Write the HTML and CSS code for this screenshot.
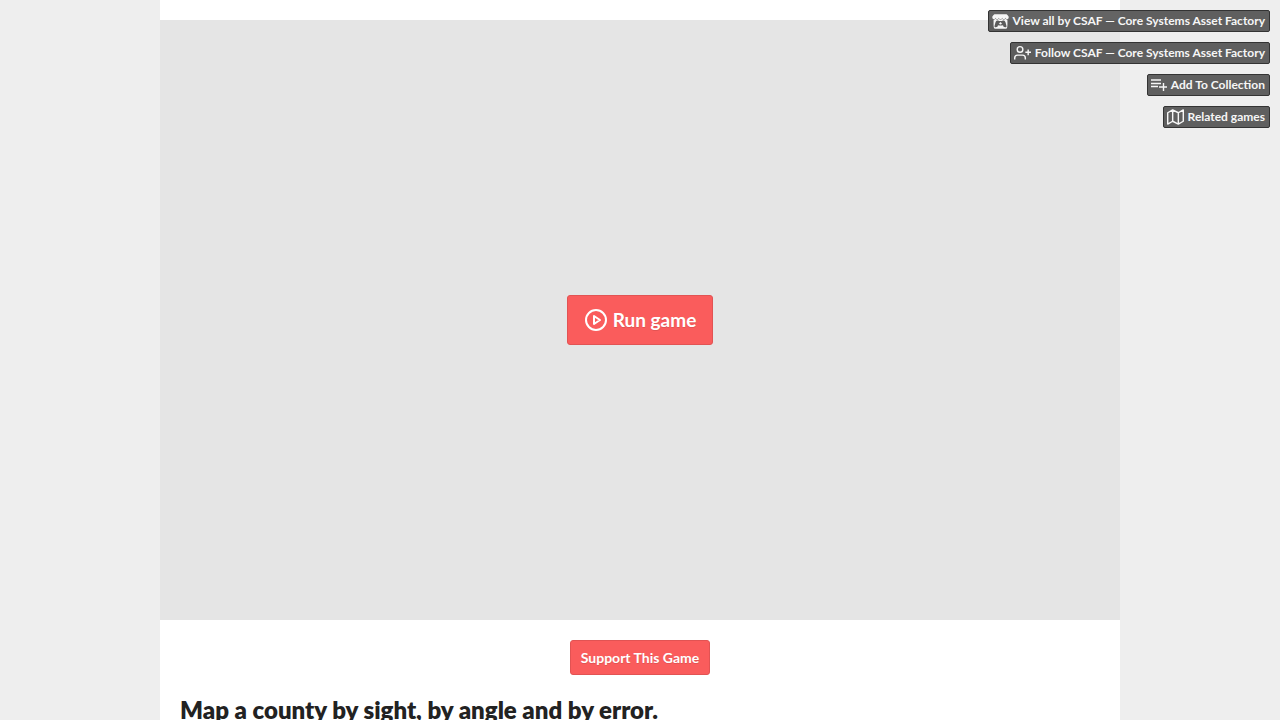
FILE: index.html
```
<!DOCTYPE html>
<html lang="en">
<head>
<meta charset="utf-8">
<title>Run game</title>
<link rel="stylesheet" href="styles.css">
</head>
<body>
<nav class="user-tools" aria-label="Page tools">
  <a class="tool" href="#all">
    <svg class="tool-icon tool-icon-solid" width="17" height="15" viewBox="0 1 24 22" aria-hidden="true"><path d="M3.13 1.338C2.08 1.96.02 4.328 0 4.95v1.03c0 1.303 1.22 2.45 2.325 2.45 1.33 0 2.436-1.102 2.436-2.41 0 1.308 1.07 2.41 2.4 2.41 1.328 0 2.362-1.102 2.362-2.41 0 1.308 1.137 2.41 2.466 2.41h.024c1.33 0 2.466-1.102 2.466-2.41 0 1.308 1.034 2.41 2.363 2.41 1.33 0 2.4-1.102 2.4-2.41 0 1.308 1.106 2.41 2.435 2.41C22.78 8.43 24 7.282 24 5.98V4.95c-.02-.62-2.082-2.99-3.13-3.612-3.253-.114-5.508-.134-8.87-.133-3.362 0-7.945.053-8.87.133zm6.376 6.477a2.74 2.74 0 0 1-.468.602c-.5.49-1.19.795-1.947.795a2.786 2.786 0 0 1-1.95-.795c-.182-.178-.32-.37-.446-.59-.127.222-.303.412-.486.59a2.788 2.788 0 0 1-1.95.795c-.092 0-.187-.025-.264-.052-.107 1.113-.152 2.176-.168 2.95v.005l-.006 1.167c.02 2.334-.23 7.564 1.03 8.85 1.952.454 5.545.662 9.15.663 3.605 0 7.198-.21 9.15-.664 1.26-1.284 1.01-6.514 1.03-8.848l-.006-1.167v-.004c-.016-.775-.06-1.838-.168-2.95-.077.026-.172.052-.263.052a2.788 2.788 0 0 1-1.95-.795c-.184-.178-.36-.368-.486-.59-.127.22-.265.412-.447.59a2.786 2.786 0 0 1-1.95.794c-.76 0-1.446-.303-1.948-.793a2.74 2.74 0 0 1-.468-.602 2.738 2.738 0 0 1-.463.602 2.787 2.787 0 0 1-1.95.794h-.16a2.787 2.787 0 0 1-1.95-.793 2.738 2.738 0 0 1-.464-.602zm-2.004 2.59v.002c.795.002 1.5 0 2.373.953.687-.072 1.406-.108 2.125-.107.72 0 1.438.035 2.125.107.873-.953 1.578-.95 2.372-.953.376 0 1.876 0 2.92 2.934l1.123 4.028c.832 2.995-.266 3.068-1.636 3.07-2.03-.075-3.156-1.55-3.156-3.025-1.124.184-2.436.276-3.748.277-1.312 0-2.624-.093-3.748-.277 0 1.475-1.125 2.95-3.156 3.026-1.37-.004-2.468-.077-1.636-3.072l1.122-4.027c1.045-2.934 2.545-2.934 2.92-2.934zM12 12.714c-.002.002-2.14 1.964-2.523 2.662l1.4-.056v1.22c0 .056.56.033 1.123.007.562.026 1.124.05 1.124-.008v-1.22l1.4.055C14.138 14.677 12 12.713 12 12.713z"/></svg>
    <span>View all by CSAF — Core Systems Asset Factory</span>
  </a>
  <a class="tool" href="#follow">
    <svg class="tool-icon" width="17" height="16" viewBox="0 1 24 22" stroke-width="2" aria-hidden="true"><path d="M16 21v-2a4 4 0 0 0-4-4H5a4 4 0 0 0-4 4v2"/><circle cx="8.5" cy="7" r="4"/><path d="M20 7v8M24 11h-8"/></svg>
    <span>Follow CSAF — Core Systems Asset Factory</span>
  </a>
  <a class="tool" href="#collection">
    <svg class="tool-icon" width="16" height="16" viewBox="0 0 16 16" stroke-width="1.4" aria-hidden="true"><path d="M0 3h10M0 6.5h10M0 9.5h7M12.5 6v8M8 10h8"/></svg>
    <span>Add To Collection</span>
  </a>
  <a class="tool" href="#related">
    <svg class="tool-icon" width="17" height="16" viewBox="0 1 24 22" stroke-width="2" stroke-linecap="round" aria-hidden="true"><path d="M1 6v16l7-4 8 4 7-4V2l-7 4-8-4zM8 2v16M16 6v16"/></svg>
    <span>Related games</span>
  </a>
</nav>
<main class="page">
  <section class="game-frame">
    <button class="button run-button" type="button">
      <svg class="play-icon" width="24" height="24" viewBox="0 0 24 24" aria-hidden="true"><circle cx="12" cy="12" r="10"/><path d="M10 8l6 4-6 4z"/></svg>
      <span>Run game</span>
    </button>
  </section>
  <div class="support-row">
    <a class="button support-button" href="#support">Support This Game</a>
  </div>
  <h1 class="headline">Map a county by sight, by angle and by error.</h1>
</main>
</body>
</html>
```

FILE: styles.css
```
* {
  box-sizing: border-box;
}

body {
  margin: 0;
  background: #eeeeee;
  color: #222222;
  font-family: Lato, "Liberation Sans", sans-serif;
}

.page {
  max-width: 960px;
  min-height: 100vh;
  margin: 0 auto;
  padding: 20px 0;
  background: #ffffff;
}

.game-frame {
  display: flex;
  align-items: center;
  justify-content: center;
  min-height: 600px;
  background: #e5e5e5;
}

.button {
  display: inline-flex;
  align-items: center;
  justify-content: center;
  border: 1px solid #e25353;
  border-radius: 3px;
  background: #fa5c5c;
  color: #ffffff;
  font-family: inherit;
  font-weight: 700;
  text-decoration: none;
  text-shadow: 0 1px 0 #e25353;
  cursor: pointer;
}

.run-button {
  gap: 5px;
  padding: 0 16px;
  font-size: 19px;
  line-height: 48px;
}

.play-icon {
  fill: none;
  stroke: currentColor;
  stroke-width: 2;
  stroke-linejoin: round;
}

.support-row {
  display: flex;
  justify-content: center;
  padding: 20px;
}

.support-button {
  padding: 0 10px;
  font-size: 14px;
  line-height: 33px;
}

.headline {
  margin: 0;
  padding: 0 20px;
  font-size: 24px;
  font-weight: 800;
  line-height: 30px;
}

.user-tools {
  position: absolute;
  top: 10px;
  right: 10px;
  display: flex;
  flex-direction: column;
  align-items: flex-end;
  gap: 10px;
}

.tool {
  display: flex;
  align-items: center;
  gap: 4px;
  padding: 0 4px 0 3px;
  border: 1px solid #333333;
  border-radius: 2px;
  background: rgba(34, 34, 34, 0.7);
  color: #f6f6f6;
  font-size: 12px;
  font-weight: 700;
  line-height: 20px;
  text-decoration: none;
}

.tool-icon {
  fill: none;
  stroke: currentColor;
  stroke-linejoin: round;
}

.tool-icon-solid {
  fill: currentColor;
  stroke: none;
}
```
